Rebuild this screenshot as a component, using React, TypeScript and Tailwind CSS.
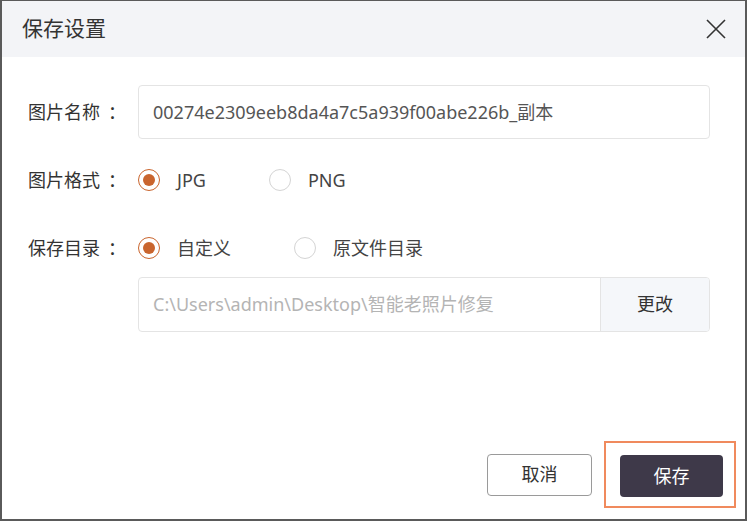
import React, { useState } from 'react';

function Radio({ checked, label, onClick }: { checked: boolean; label: string; onClick: () => void }) {
  return (
    <button type="button" onClick={onClick} className="flex items-center">
      <span
        className={
          checked
            ? 'flex h-[22px] w-[22px] items-center justify-center rounded-full border-[1.5px] border-[#c9652e]'
            : 'flex h-[22px] w-[22px] items-center justify-center rounded-full border border-[#d4d4d4]'
        }
      >
        {checked && <span className="h-[12px] w-[12px] rounded-full bg-[#c9652e]" />}
      </span>
      <span className="ml-[17px] text-[18px] text-[#444]">{label}</span>
    </button>
  );
}

function Label({ text }: { text: string }) {
  return (
    <span className="w-[110px] text-[18px] text-[#333]">
      {text}
      <span className="ml-[8px]">：</span>
    </span>
  );
}

export default function App() {
  const [format, setFormat] = useState('jpg');
  const [dir, setDir] = useState('custom');

  return (
    <div
      className="h-[522px] w-[750px] bg-white"
      style={{ fontFamily: '"Noto Sans", "Noto Sans CJK SC", sans-serif' }}
    >
      <div className="flex h-[521px] w-[747px] flex-col border-b-2 border-l-2 border-r-2 border-t border-[#5a5a5a]">
        <header className="flex h-[56px] items-center justify-between bg-[#f3f4f7] pl-[20px] pr-[14px]">
          <h1 className="text-[21px] text-[#333]">保存设置</h1>
          <button type="button" className="p-1 text-[#333]">
            <svg width="22" height="22" viewBox="0 0 22 22" fill="none" stroke="currentColor" strokeWidth="1.6">
              <path d="M2 2 L20 20 M20 2 L2 20" />
            </svg>
          </button>
        </header>

        <div className="flex flex-1 flex-col pl-[26px] pr-[35px] pt-[28px]">
          <div className="flex h-[54px] items-center">
            <Label text="图片名称" />
            <div className="flex h-full flex-1 items-center rounded border border-[#e4e4e4] px-[14px] text-[18px] text-[#555]">
              00274e2309eeb8da4a7c5a939f00abe226b_副本
            </div>
          </div>

          <div className="mt-[21px] flex h-[40px] items-center">
            <Label text="图片格式" />
            <div className="flex items-center gap-[63px]">
              <Radio checked={format === 'jpg'} label="JPG" onClick={() => setFormat('jpg')} />
              <Radio checked={format === 'png'} label="PNG" onClick={() => setFormat('png')} />
            </div>
          </div>

          <div className="mt-[28px] flex h-[40px] items-center">
            <Label text="保存目录" />
            <div className="flex items-center gap-[63px]">
              <Radio checked={dir === 'custom'} label="自定义" onClick={() => setDir('custom')} />
              <Radio checked={dir === 'source'} label="原文件目录" onClick={() => setDir('source')} />
            </div>
          </div>

          <div className="ml-[110px] mt-[9px] flex h-[55px] overflow-hidden rounded border border-[#e4e4e4]">
            <div className="flex flex-1 items-center px-[14px] text-[18px] text-[#b4b4b4]">
              C:\Users\admin\Desktop\智能老照片修复
            </div>
            <button type="button" className="w-[109px] border-l border-[#e4e4e4] bg-[#f5f7fa] text-[18px] text-[#333]">
              更改
            </button>
          </div>

          <div className="mb-[11px] mt-auto flex items-center justify-end gap-[12px]">
            <button
              type="button"
              className="h-[42px] w-[105px] rounded border border-[#9a9a9a] text-[18px] text-[#333]"
            >
              取消
            </button>
            <div className="mr-[-26px] border-2 border-[#f08a5d] pb-[9px] pl-[14px] pr-[11px] pt-[12px]">
              <button type="button" className="h-[42px] w-[103px] rounded bg-[#3e3949] text-[18px] text-white">
                保存
              </button>
            </div>
          </div>
        </div>
      </div>
    </div>
  );
}
